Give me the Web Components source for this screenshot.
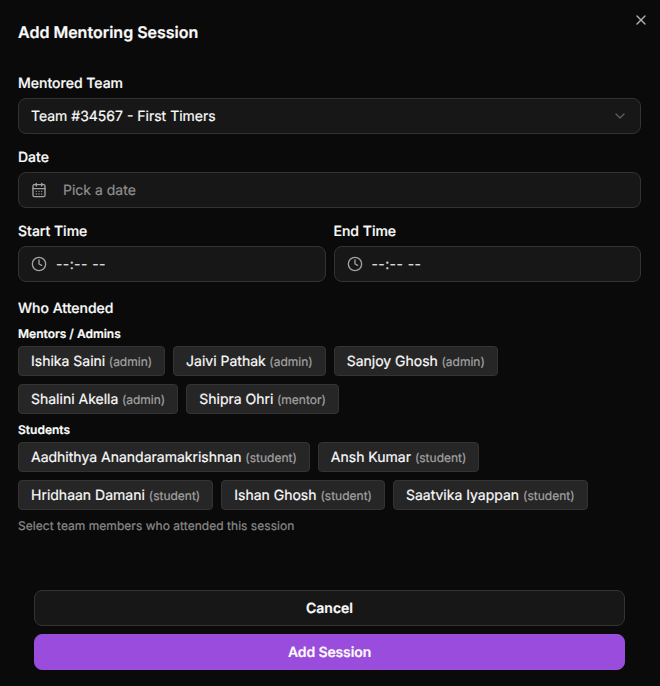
<!DOCTYPE html>
<html>
<head>
<meta charset="utf-8">
<title>Add Mentoring Session</title>
<style>
  html,body{margin:0;padding:0;background:#0a0a0a;}
  body{font-family:Inter,"Liberation Sans",sans-serif;color:#fafafa;text-rendering:geometricPrecision;-webkit-text-stroke:.2px;}
</style>
</head>
<body>
<session-dialog heading="Add Mentoring Session">
  <form-field label="Mentored Team">
    <select-box value="Team #34567 - First Timers"></select-box>
  </form-field>
  <form-field label="Date">
    <icon-input icon="calendar" value="Pick a date" gap="16"></icon-input>
  </form-field>
  <time-row>
    <form-field label="Start Time"><icon-input icon="clock" value="--:-- --" gap="9" time></icon-input></form-field>
    <form-field label="End Time"><icon-input icon="clock" value="--:-- --" gap="9" time></icon-input></form-field>
  </time-row>
  <attendee-picker hint="Select team members who attended this session">
    <chip-group title="Mentors / Admins">
      <member-chip name="Ishika Saini" role="admin"></member-chip>
      <member-chip name="Jaivi Pathak" role="admin"></member-chip>
      <member-chip name="Sanjoy Ghosh" role="admin"></member-chip>
      <member-chip name="Shalini Akella" role="admin"></member-chip>
      <member-chip name="Shipra Ohri" role="mentor"></member-chip>
    </chip-group>
    <chip-group title="Students">
      <member-chip name="Aadhithya Anandaramakrishnan" role="student"></member-chip>
      <member-chip name="Ansh Kumar" role="student"></member-chip>
      <member-chip name="Hridhaan Damani" role="student"></member-chip>
      <member-chip name="Ishan Ghosh" role="student"></member-chip>
      <member-chip name="Saatvika Iyappan" role="student"></member-chip>
    </chip-group>
  </attendee-picker>
  <dialog-button slot="footer">Cancel</dialog-button>
  <dialog-button slot="footer" primary>Add Session</dialog-button>
</session-dialog>

<script>
// icons used by the inputs
const ICONS = {
  calendar: `<svg width="16" height="16" viewBox="0 0 24 24" fill="none" stroke="#a3a3a3" stroke-width="2" stroke-linecap="round" stroke-linejoin="round"><path d="M8 2v4"/><path d="M16 2v4"/><rect x="3" y="4" width="18" height="18" rx="2"/><path d="M3 10h18"/><path d="M8 14h.01"/><path d="M12 14h.01"/><path d="M16 14h.01"/><path d="M8 18h.01"/><path d="M12 18h.01"/><path d="M16 18h.01"/></svg>`,
  clock: `<svg width="16" height="16" viewBox="0 0 24 24" fill="none" stroke="#a3a3a3" stroke-width="2" stroke-linecap="round" stroke-linejoin="round"><circle cx="12" cy="12" r="10"/><path d="M12 6v6l4 2"/></svg>`
};

class SessionDialog extends HTMLElement{
  connectedCallback(){
    this.attachShadow({mode:"open"}).innerHTML = `
      <style>
        :host{display:flex;flex-direction:column;box-sizing:border-box;width:660px;height:686px;padding:20px 19px 16px 18px;position:relative;background:#0a0a0a;}
        h2{margin:0 0 29px;font-size:16px;line-height:24px;font-weight:600;color:#fafafa;}
        .body{display:flex;flex-direction:column;gap:13px;}
        footer{margin-top:auto;display:flex;flex-direction:column;gap:8px;padding:0 16px;}
        button{position:absolute;top:12px;right:11px;width:16px;height:16px;padding:0;border:0;background:none;display:flex;}
      </style>
      <h2>${this.getAttribute("heading")}</h2>
      <div class="body"><slot></slot></div>
      <footer><slot name="footer"></slot></footer>
      <button aria-label="Close"><svg width="16" height="16" viewBox="0 0 24 24" fill="none" stroke="#b0b0b0" stroke-width="2" stroke-linecap="round" stroke-linejoin="round"><path d="M18 6 6 18"/><path d="m6 6 12 12"/></svg></button>
    `;
  }
}

class FormField extends HTMLElement{
  connectedCallback(){
    this.attachShadow({mode:"open"}).innerHTML = `
      <style>
        :host{display:block;min-width:0;}
        label{display:block;padding-top:1px;font-size:14px;line-height:20px;font-weight:500;color:#fafafa;margin-bottom:4px;}
      </style>
      <label>${this.getAttribute("label")}</label>
      <slot></slot>
    `;
  }
}

class SelectBox extends HTMLElement{
  connectedCallback(){
    this.attachShadow({mode:"open"}).innerHTML = `
      <style>
        :host{display:flex;align-items:center;justify-content:space-between;box-sizing:border-box;height:36px;padding:0 12px;background:#171717;border:1px solid #333;border-radius:8px;font-size:14px;color:#fafafa;}
        svg{opacity:.5;}
      </style>
      <span>${this.getAttribute("value")}</span>
      <svg width="16" height="16" viewBox="0 0 24 24" fill="none" stroke="#a3a3a3" stroke-width="2" stroke-linecap="round" stroke-linejoin="round"><path d="m6 9 6 6 6-6"/></svg>
    `;
  }
}

class IconInput extends HTMLElement{
  connectedCallback(){
    this.attachShadow({mode:"open"}).innerHTML = `
      <style>
        :host{display:flex;align-items:center;box-sizing:border-box;height:36px;padding:0 12px;gap:${this.getAttribute("gap")}px;background:#171717;border:1px solid #333;border-radius:8px;font-size:14px;color:#8f8f8f;}
        :host([time]){color:#d8d8d8;letter-spacing:.4px;}
        svg{flex:none;}
      </style>
      ${ICONS[this.getAttribute("icon")]}
      <span>${this.getAttribute("value")}</span>
    `;
  }
}

class TimeRow extends HTMLElement{
  connectedCallback(){
    this.attachShadow({mode:"open"}).innerHTML = `
      <style>:host{display:grid;grid-template-columns:1fr 1fr;gap:8px;}</style>
      <slot></slot>
    `;
  }
}

class AttendeePicker extends HTMLElement{
  connectedCallback(){
    this.attachShadow({mode:"open"}).innerHTML = `
      <style>
        :host{display:flex;flex-direction:column;margin-top:3px;}
        h3{margin:0 0 7px;padding-top:1px;font-size:14px;line-height:20px;font-weight:500;color:#fafafa;}
        .groups{display:flex;flex-direction:column;gap:8px;}
        p{margin:8px 0 0;font-size:12px;line-height:16px;color:#8a8a8a;letter-spacing:.04px;}
      </style>
      <h3>Who Attended</h3>
      <div class="groups"><slot></slot></div>
      <p>${this.getAttribute("hint")}</p>
    `;
  }
}

class ChipGroup extends HTMLElement{
  connectedCallback(){
    this.attachShadow({mode:"open"}).innerHTML = `
      <style>
        :host{display:block;}
        h4{margin:0 0 4px;font-size:12px;line-height:16px;font-weight:600;color:#fafafa;}
        .chips{display:flex;flex-wrap:wrap;gap:8px;}
      </style>
      <h4>${this.getAttribute("title")}</h4>
      <div class="chips"><slot></slot></div>
    `;
  }
}

class MemberChip extends HTMLElement{
  connectedCallback(){
    this.attachShadow({mode:"open"}).innerHTML = `
      <style>
        :host{display:inline-block;box-sizing:border-box;height:30px;padding:1px 12px 0;background:#262626;border:1px solid #333;border-radius:4px;font-size:14px;line-height:27px;color:#fafafa;white-space:nowrap;}
        small{font-size:12px;color:#a3a3a3;}
        :host([role=admin]) small,:host([role=mentor]) small{margin-left:-.4px;}
      </style>
      <span>${this.getAttribute("name")}</span> <small>(${this.getAttribute("role")})</small>
    `;
  }
}

class DialogButton extends HTMLElement{
  connectedCallback(){
    this.attachShadow({mode:"open"}).innerHTML = `
      <style>
        :host{display:flex;align-items:center;justify-content:center;box-sizing:border-box;height:36px;border-radius:8px;font-size:14px;font-weight:600;color:#fafafa;background:#171717;border:1px solid #333;}
        :host([primary]){background:#9a4cdd;border-color:#9a4cdd;letter-spacing:-.12px;}
      </style>
      <slot></slot>
    `;
  }
}

customElements.define('session-dialog', SessionDialog);
customElements.define('form-field', FormField);
customElements.define('select-box', SelectBox);
customElements.define('icon-input', IconInput);
customElements.define('time-row', TimeRow);
customElements.define('attendee-picker', AttendeePicker);
customElements.define('chip-group', ChipGroup);
customElements.define('member-chip', MemberChip);
customElements.define('dialog-button', DialogButton);
</script>
</body>
</html>
